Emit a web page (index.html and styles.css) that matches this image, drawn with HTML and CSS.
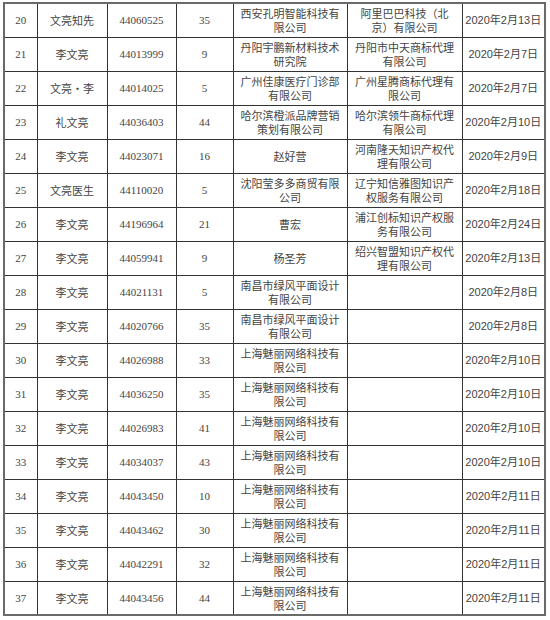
FILE: index.html
```html
<!DOCTYPE html>
<html lang="zh-CN">
<head>
<meta charset="utf-8">
<title>商标申请列表</title>
<link rel="stylesheet" href="styles.css">
</head>
<body>
<table class="grid">
  <colgroup>
    <col class="c-no"><col class="c-name"><col class="c-reg"><col class="c-cls"><col class="c-app"><col class="c-agent"><col class="c-date">
  </colgroup>
  <tbody>
    <tr><td class="num">20</td><td>文亮知先</td><td class="num">44060525</td><td class="num">35</td><td>西安孔明智能科技有限公司</td><td>阿里巴巴科技（北京）有限公司</td><td class="date">2020年2月13日</td></tr>
    <tr><td class="num">21</td><td>李文亮</td><td class="num">44013999</td><td class="num">9</td><td>丹阳宇鹏新材料技术研究院</td><td>丹阳市中天商标代理有限公司</td><td class="date">2020年2月7日</td></tr>
    <tr><td class="num">22</td><td>文亮・李</td><td class="num">44014025</td><td class="num">5</td><td>广州佳康医疗门诊部有限公司</td><td>广州星腾商标代理有限公司</td><td class="date">2020年2月7日</td></tr>
    <tr><td class="num">23</td><td>礼文亮</td><td class="num">44036403</td><td class="num">44</td><td>哈尔滨橙派品牌营销策划有限公司</td><td>哈尔滨领牛商标代理有限公司</td><td class="date">2020年2月10日</td></tr>
    <tr><td class="num">24</td><td>李文亮</td><td class="num">44023071</td><td class="num">16</td><td>赵好营</td><td>河南隆天知识产权代理有限公司</td><td class="date">2020年2月9日</td></tr>
    <tr><td class="num">25</td><td>文亮医生</td><td class="num">44110020</td><td class="num">5</td><td>沈阳莹多多商贸有限公司</td><td>辽宁知信雅图知识产权服务有限公司</td><td class="date">2020年2月18日</td></tr>
    <tr><td class="num">26</td><td>李文亮</td><td class="num">44196964</td><td class="num">21</td><td>曹宏</td><td>浦江创标知识产权服务有限公司</td><td class="date">2020年2月24日</td></tr>
    <tr><td class="num">27</td><td>李文亮</td><td class="num">44059941</td><td class="num">9</td><td>杨圣芳</td><td>绍兴智盟知识产权代理有限公司</td><td class="date">2020年2月13日</td></tr>
    <tr><td class="num">28</td><td>李文亮</td><td class="num">44021131</td><td class="num">5</td><td>南昌市绿风平面设计有限公司</td><td></td><td class="date">2020年2月8日</td></tr>
    <tr><td class="num">29</td><td>李文亮</td><td class="num">44020766</td><td class="num">35</td><td>南昌市绿风平面设计有限公司</td><td></td><td class="date">2020年2月8日</td></tr>
    <tr><td class="num">30</td><td>李文亮</td><td class="num">44026988</td><td class="num">33</td><td>上海魅丽网络科技有限公司</td><td></td><td class="date">2020年2月10日</td></tr>
    <tr><td class="num">31</td><td>李文亮</td><td class="num">44036250</td><td class="num">35</td><td>上海魅丽网络科技有限公司</td><td></td><td class="date">2020年2月10日</td></tr>
    <tr><td class="num">32</td><td>李文亮</td><td class="num">44026983</td><td class="num">41</td><td>上海魅丽网络科技有限公司</td><td></td><td class="date">2020年2月10日</td></tr>
    <tr><td class="num">33</td><td>李文亮</td><td class="num">44034037</td><td class="num">43</td><td>上海魅丽网络科技有限公司</td><td></td><td class="date">2020年2月10日</td></tr>
    <tr><td class="num">34</td><td>李文亮</td><td class="num">44043450</td><td class="num">10</td><td>上海魅丽网络科技有限公司</td><td></td><td class="date">2020年2月11日</td></tr>
    <tr><td class="num">35</td><td>李文亮</td><td class="num">44043462</td><td class="num">30</td><td>上海魅丽网络科技有限公司</td><td></td><td class="date">2020年2月11日</td></tr>
    <tr><td class="num">36</td><td>李文亮</td><td class="num">44042291</td><td class="num">32</td><td>上海魅丽网络科技有限公司</td><td></td><td class="date">2020年2月11日</td></tr>
    <tr><td class="num">37</td><td>李文亮</td><td class="num">44043456</td><td class="num">44</td><td>上海魅丽网络科技有限公司</td><td></td><td class="date">2020年2月11日</td></tr>
  </tbody>
</table>
</body>
</html>
```

FILE: styles.css
```css
html, body {
  margin: 0;
  padding: 0;
  background: #ffffff;
}

body {
  font-family: "Noto Sans CJK SC", "Liberation Sans", sans-serif;
  font-size: 11px;
  color: #444444;
}

.grid {
  margin: 2px 0 0 3px;
  width: 541px;
  table-layout: fixed;
  border-collapse: collapse;
  border: 2px solid #6a6a6a;
}

.c-no { width: 33px; }
.c-name { width: 70px; }
.c-reg { width: 69px; }
.c-cls { width: 57px; }
.c-app { width: 114px; }
.c-agent { width: 115px; }
.c-date { width: 83px; }

.grid tr {
  height: 34px;
}

.grid td {
  border: 1px solid #333333;
  padding: 2px 5px;
  line-height: 14px;
  text-align: center;
  vertical-align: middle;
  word-break: break-all;
}

.grid td.num {
  font-family: "Liberation Serif", "Noto Sans CJK SC", serif;
  padding: 2px 1px;
}

.grid td.date {
  font-family: "Liberation Sans", "Noto Sans CJK SC", sans-serif;
  padding: 2px 1px;
  white-space: nowrap;
}
```
